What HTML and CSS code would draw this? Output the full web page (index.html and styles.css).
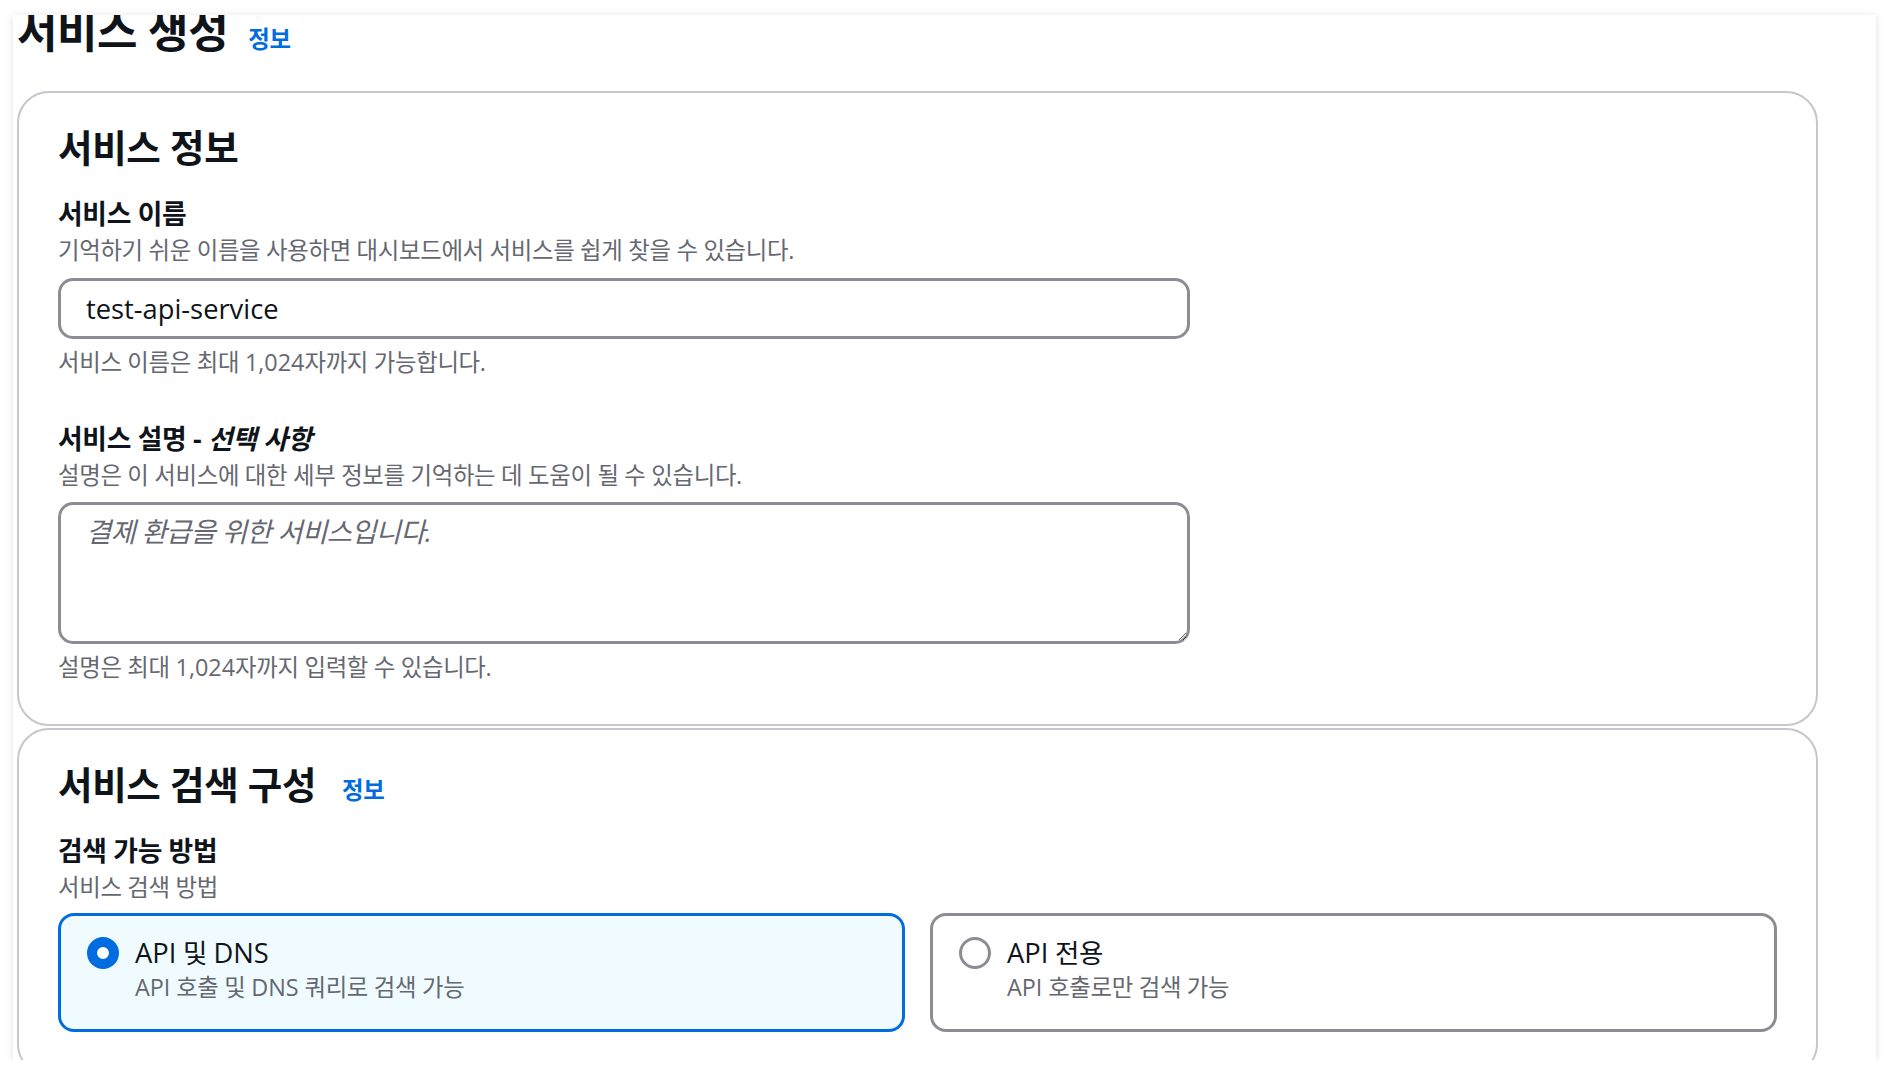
FILE: index.html
```html
<!DOCTYPE html>
<html lang="ko">
<head>
<meta charset="utf-8">
<title>서비스 생성</title>
<link rel="stylesheet" href="styles.css">
</head>
<body>
<div class="frame">
  <div class="page">
    <header class="page-header">
      <h1 class="page-title">서비스 생성</h1>
      <a class="info-link" href="#">정보</a>
    </header>

    <section class="card">
      <div class="card-header">
        <h2 class="card-title">서비스 정보</h2>
      </div>

      <div class="field">
        <label class="field-label" for="svc-name">서비스 이름</label>
        <p class="field-desc">기억하기 쉬운 이름을 사용하면 대시보드에서 서비스를 쉽게 찾을 수 있습니다.</p>
        <input id="svc-name" class="text-input" type="text" value="test-api-service">
        <p class="field-hint">서비스 이름은 최대 <span class="en">1,024</span>자까지 가능합니다.</p>
      </div>

      <div class="field">
        <label class="field-label" for="svc-desc">서비스 설명 - <i class="optional">선택 사항</i></label>
        <p class="field-desc">설명은 이 서비스에 대한 세부 정보를 기억하는 데 도움이 될 수 있습니다.</p>
        <textarea id="svc-desc" class="text-area" placeholder="결제 환급을 위한 서비스입니다."></textarea>
        <p class="field-hint">설명은 최대 <span class="en">1,024</span>자까지 입력할 수 있습니다.</p>
      </div>
    </section>

    <section class="card">
      <div class="card-header">
        <h2 class="card-title">서비스 검색 구성</h2>
        <a class="info-link" href="#">정보</a>
      </div>

      <div class="field">
        <div class="field-label">검색 가능 방법</div>
        <p class="field-desc">서비스 검색 방법</p>
        <div class="tiles">
          <div class="tile selected">
            <span class="radio checked"></span>
            <div class="tile-text">
              <div class="tile-title"><span class="en">API</span> 및 <span class="en">DNS</span></div>
              <div class="tile-desc"><span class="en">API</span> 호출 및 <span class="en">DNS</span> 쿼리로 검색 가능</div>
            </div>
          </div>
          <div class="tile">
            <span class="radio"></span>
            <div class="tile-text">
              <div class="tile-title"><span class="en">API</span> 전용</div>
              <div class="tile-desc"><span class="en">API</span> 호출로만 검색 가능</div>
            </div>
          </div>
        </div>
      </div>
    </section>
  </div>
</div>
</body>
</html>
```

FILE: styles.css
```css
* {
  box-sizing: border-box;
}

html,
body {
  margin: 0;
  padding: 0;
  background: #ffffff;
}

body {
  font-family: "Open Sans", "Noto Sans CJK KR", sans-serif;
  color: #0f141a;
  letter-spacing: -0.02em;
}

.en {
  letter-spacing: 0;
}

.frame {
  margin: 15px 0 0 13px;
  width: 1863px;
  height: 1045px;
  overflow: hidden;
  background: #ffffff;
  box-shadow: 0 1px 7px rgba(0, 0, 0, 0.13);
}

.page {
  padding: 0 58px 0 4px;
}

.page-header {
  display: flex;
  align-items: baseline;
  gap: 20px;
  margin-top: -12px;
  height: 56px;
}

.page-title {
  margin: 0;
  font-size: 44px;
  line-height: 56px;
  font-weight: 700;
  letter-spacing: -0.01em;
}

.info-link {
  font-size: 23.4px;
  line-height: 30px;
  font-weight: 700;
  color: #006ce0;
  text-decoration: none;
}

.card {
  margin-top: 32px;
  border: 2px solid #c6c6cd;
  border-radius: 32px;
  padding: 31px 39px 42px;
  background: #ffffff;
}

.card + .card {
  margin-top: 2px;
}

.card-header {
  display: flex;
  align-items: baseline;
  gap: 26px;
}

.card-title {
  margin: 0;
  font-size: 37.5px;
  line-height: 48px;
  font-weight: 700;
}

.field {
  margin-top: 25px;
}

.field + .field {
  margin-top: 45px;
}

.field-label {
  display: block;
  font-size: 26.8px;
  line-height: 34px;
  font-weight: 700;
}

.optional {
  font-style: italic;
}

.field-desc {
  margin: 4px 0 0;
  font-size: 23.4px;
  line-height: 30px;
  color: #656871;
}

.text-input {
  display: block;
  margin-top: 13px;
  width: 1132px;
  height: 61px;
  border: 3px solid #8c8c94;
  border-radius: 15px;
  padding: 0 25px;
  font-family: "Open Sans", sans-serif;
  font-size: 27.3px;
  letter-spacing: 0;
  color: #0f141a;
  background: #ffffff;
  outline: none;
}

.text-area {
  display: block;
  margin-top: 12px;
  width: 1132px;
  height: 142px;
  border: 3px solid #8c8c94;
  border-radius: 15px;
  padding: 9px 25px;
  font-family: "Open Sans", "Noto Sans CJK KR", sans-serif;
  font-size: 27.3px;
  line-height: 36px;
  letter-spacing: -0.02em;
  color: #0f141a;
  background: #ffffff;
  outline: none;
}

.text-area::placeholder {
  color: #656871;
  font-style: italic;
  opacity: 1;
}

.field-hint {
  margin: 8px 0 0;
  font-size: 23.4px;
  line-height: 30px;
  color: #656871;
}

.tiles {
  display: grid;
  grid-template-columns: 1fr 1fr;
  gap: 25px;
  margin-top: 11px;
}

.tile {
  display: flex;
  align-items: flex-start;
  gap: 16.5px;
  height: 119px;
  border: 3px solid #8c8c94;
  border-radius: 16px;
  padding: 20px 24px 0 25.5px;
  background: #ffffff;
}

.tile.selected {
  border-color: #006ce0;
  background: #f0fbff;
}

.radio {
  flex: none;
  width: 32px;
  height: 32px;
  margin-top: 1px;
  border-radius: 50%;
  border: 3.5px solid #8c8c94;
  background: #ffffff;
}

.radio.checked {
  border: 10px solid #006ce0;
}

.tile-title {
  font-size: 26.5px;
  line-height: 34px;
  color: #0f141a;
}

.tile-title .en {
  font-size: 27.3px;
}

.tile-desc {
  margin-top: 2px;
  font-size: 23.4px;
  line-height: 30px;
  color: #656871;
}
```
